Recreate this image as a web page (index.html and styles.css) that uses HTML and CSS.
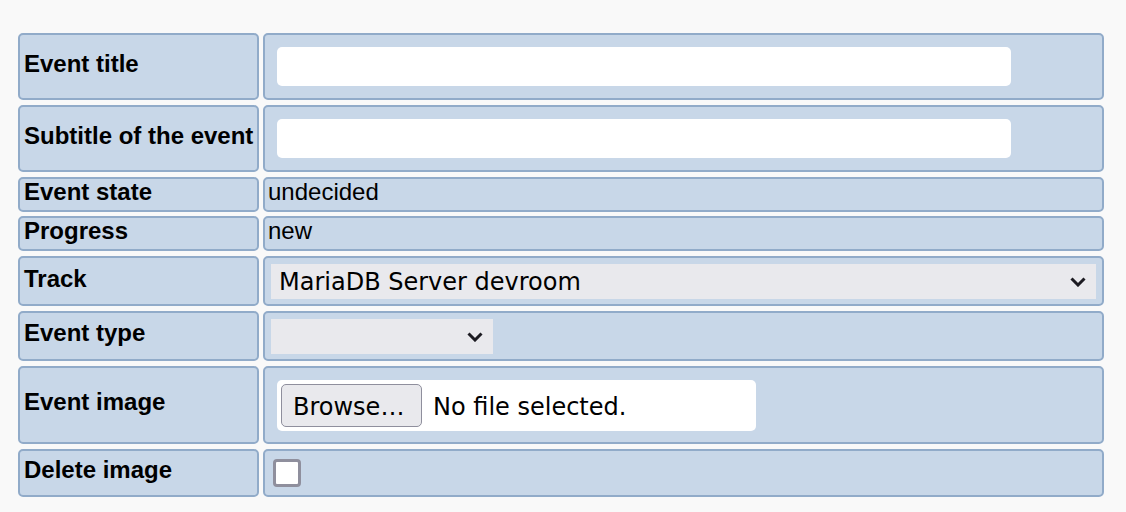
FILE: index.html
```html
<!DOCTYPE html>
<html>
<head>
<meta charset="utf-8">
<link rel="stylesheet" href="styles.css">
</head>
<body>
<form class="form-grid">
  <div class="label">Event title</div>
  <div class="value"><input class="text-input" type="text"></div>

  <div class="label">Subtitle of the event</div>
  <div class="value"><input class="text-input" type="text"></div>

  <div class="label">Event state</div>
  <div class="value text">undecided</div>

  <div class="label">Progress</div>
  <div class="value text">new</div>

  <div class="label">Track</div>
  <div class="value">
    <span class="select-wrap select-full">
      <select class="select"><option>MariaDB Server devroom</option></select>
      <svg class="chevron" width="16" height="10" viewBox="0 0 16 10"><path d="M1.5 1.5 L8 8 L14.5 1.5" fill="none" stroke="#1c1b22" stroke-width="3"/></svg>
    </span>
  </div>

  <div class="label">Event type</div>
  <div class="value">
    <span class="select-wrap select-small">
      <select class="select"><option></option></select>
      <svg class="chevron" width="16" height="10" viewBox="0 0 16 10"><path d="M1.5 1.5 L8 8 L14.5 1.5" fill="none" stroke="#1c1b22" stroke-width="3"/></svg>
    </span>
  </div>

  <div class="label">Event image</div>
  <div class="value">
    <div class="file-box">
      <span class="file-btn">Browse…</span>
      <span class="file-text">No file selected.</span>
    </div>
  </div>

  <div class="label">Delete image</div>
  <div class="value"><span class="checkbox"></span></div>
</form>
</body>
</html>
```
FILE: styles.css
```css
html, body {
  margin: 0;
  background: #f9f9f9;
}
body {
  padding: 33px 0 0 18px;
  font-family: "Liberation Sans", Arial, sans-serif;
  font-size: 24px;
  line-height: 26px;
  color: #000;
}
.form-grid {
  display: grid;
  grid-template-columns: 241px 841px;
  column-gap: 4px;
  row-gap: 4.8px;
  margin: 0;
}
.label, .value {
  box-sizing: border-box;
  background: #c8d7e8;
  border: 2px solid #91abc9;
  border-radius: 5px;
}
.label {
  display: flex;
  align-items: center;
  padding: 0 4px 5px 4px;
  font-weight: bold;
  white-space: nowrap;
}
.value {
  padding: 2px 3px;
  display: flex;
  align-items: flex-start;
}
.value.text {
  padding: 0 3px;
}
.text-input {
  box-sizing: border-box;
  display: block;
  width: 734px;
  height: 39px;
  margin: 10px 0 10px 9px;
  border: none;
  border-radius: 5px;
  background: #fff;
  padding: 0 8px;
  font-family: "DejaVu Sans", sans-serif;
  font-size: 24px;
  outline: none;
}
.select-wrap {
  position: relative;
  display: block;
  margin: 4px 0 3px 3px;
  height: 35px;
}
.select-full { width: 825px; }
.select-small { width: 222px; }
.select {
  -webkit-appearance: none;
  appearance: none;
  box-sizing: border-box;
  width: 100%;
  height: 35px;
  margin: 0;
  border: none;
  border-radius: 0;
  background: #e9e9ed;
  color: #000;
  padding: 0 40px 0 8px;
  font-family: "DejaVu Sans", sans-serif;
  font-size: 24px;
  outline: none;
}
.chevron {
  position: absolute;
  right: 10px;
  top: 13px;
  pointer-events: none;
}
.file-box {
  box-sizing: border-box;
  display: flex;
  align-items: center;
  width: 479px;
  height: 51px;
  margin: 10px 0 9px 9px;
  padding: 0 4px;
  background: #fff;
  border-radius: 5px;
  font-family: "DejaVu Sans", sans-serif;
  font-size: 24px;
  line-height: normal;
}
.file-btn {
  box-sizing: border-box;
  display: flex;
  align-items: center;
  height: 43px;
  width: 141px;
  padding: 3px 0 0 11px;
  background: #e9e9ed;
  border: 1.5px solid #8f8f9d;
  border-radius: 5px;
  white-space: nowrap;
}
.file-text {
  margin-left: 11px;
  padding-top: 3px;
  white-space: nowrap;
}
.checkbox {
  box-sizing: border-box;
  display: block;
  width: 28px;
  height: 28px;
  margin: 6px 0 6px 5px;
  border: 3px solid #8f8f9d;
  border-radius: 4px;
  background: #fff;
}
```
